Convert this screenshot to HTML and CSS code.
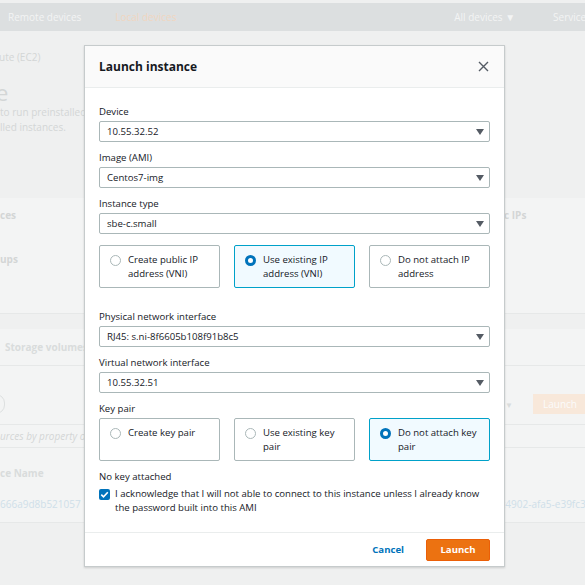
FILE: index.html
```html
<!DOCTYPE html>
<html>
<head>
  <title>Launch instance</title>
  <link rel="stylesheet" href="styles.css">
</head>
<body>

  <!-- Page behind the dialog -->
  <div class="topnav">
    <span class="nav-link">Remote devices</span>
    <span class="nav-link active">Local devices</span>
    <span class="nav-spacer"></span>
    <span class="nav-link">All devices &#9660;</span>
    <span class="nav-link">Services</span>
  </div>

  <div class="page">
    <div class="crumb">ute (EC2)</div>
    <div class="page-title">e</div>
    <div class="page-desc"> to run preinstalled<br>lled instances.</div>

    <div class="resources">
      <div class="res-col">
        <div class="res-item">ces</div>
        <div class="res-item">ups</div>
      </div>
      <div class="res-col res-right">
        <div class="res-item">Elastic IPs</div>
      </div>
    </div>

    <div class="volumes">
      <div class="tabs"><span class="tab">Storage volumes</span></div>
      <div class="toolbar">
        <span class="search"></span>
        <span class="toolbar-spacer"></span>
        <span class="filter-select">&#9660;</span>
        <span class="bg-btn">Launch</span>
      </div>
      <div class="filter-hint">urces by property or</div>
      <div class="table-head">ce Name</div>
      <div class="table-row">
        <span class="cell-link">666a9d8b521057</span>
        <span class="cell-link cell-right">s.i-9a7c4902-afa5-e39fc3a1</span>
      </div>
    </div>
  </div>

  <!-- Launch instance dialog -->
  <div class="modal">
    <div class="modal-header">
      <div class="modal-title">Launch instance</div>
      <svg class="close-icon" width="11" height="11" viewBox="0 0 11 11">
        <path d="M1 1 L10 10 M10 1 L1 10" stroke="#545b64" stroke-width="1.4" fill="none"/>
      </svg>
    </div>

    <div class="modal-body">
      <div class="field">
        <div class="field-label">Device</div>
        <div class="select">10.55.32.52<span class="caret"></span></div>
      </div>
      <div class="field">
        <div class="field-label">Image (AMI)</div>
        <div class="select">Centos7-img<span class="caret"></span></div>
      </div>
      <div class="field">
        <div class="field-label">Instance type</div>
        <div class="select">sbe-c.small<span class="caret"></span></div>
      </div>

      <div class="tiles ip-tiles">
        <div class="tile">
          <span class="radio"></span>
          <span class="tile-text">Create public IP address (VNI)</span>
        </div>
        <div class="tile selected">
          <span class="radio checked"></span>
          <span class="tile-text">Use existing IP address (VNI)</span>
        </div>
        <div class="tile">
          <span class="radio"></span>
          <span class="tile-text">Do not attach IP address</span>
        </div>
      </div>

      <div class="field">
        <div class="field-label">Physical network interface</div>
        <div class="select">RJ45: s.ni-8f6605b108f91b8c5<span class="caret"></span></div>
      </div>
      <div class="field">
        <div class="field-label">Virtual network interface</div>
        <div class="select">10.55.32.51<span class="caret"></span></div>
      </div>
      <div class="field">
        <div class="field-label">Key pair</div>
        <div class="tiles key-tiles">
          <div class="tile">
            <span class="radio"></span>
            <span class="tile-text">Create key pair</span>
          </div>
          <div class="tile">
            <span class="radio"></span>
            <span class="tile-text">Use existing key pair</span>
          </div>
          <div class="tile selected">
            <span class="radio checked"></span>
            <span class="tile-text">Do not attach key pair</span>
          </div>
        </div>
      </div>

      <div class="field-label no-key">No key attached</div>
      <div class="ack">
        <span class="checkbox">
          <svg width="11" height="11" viewBox="0 0 11 11">
            <path d="M2.3 5.6 L4.5 7.8 L8.8 3.2" stroke="#fff" stroke-width="1.6" fill="none"/>
          </svg>
        </span>
        <span class="ack-text">I acknowledge that I will not able to connect to this instance unless I already know the password built into this AMI</span>
      </div>
    </div>

    <div class="modal-footer">
      <span class="link-btn">Cancel</span>
      <span class="primary-btn">Launch</span>
    </div>
  </div>

</body>
</html>
```

FILE: styles.css
```css
body {
  font-family: 'Open Sans', sans-serif;
  background-color: #eff0f0;
  margin: 0;
  width: 585px;
  height: 585px;
  overflow: hidden;
  position: relative;
}

/* Top navigation (faded behind the dialog) */
.topnav {
  margin-top: 3px;
  height: 28px;
  background-color: #dcdfe0;
  display: flex;
  align-items: center;
  padding-left: 8px;
  font-size: 10px;
  color: #f3f4f4;
}

.nav-link {
  margin-right: 34px;
  white-space: nowrap;
}

.nav-link.active {
  color: #f0d6c0;
}

.nav-link:nth-child(4) {
  margin-right: 38px;
}

.nav-link:last-child {
  margin-right: -6px;
}

.nav-spacer {
  flex: 1;
}

/* Page content */
.page {
  color: #d3d6d6;
  font-size: 10px;
}

.crumb {
  margin: 19px 0 0 -1px;
  height: 15px;
  line-height: 15px;
}

.page-title {
  margin: 14px 0 0 -4px;
  font-size: 22px;
  line-height: 26px;
}

.page-desc {
  margin-top: 0;
  line-height: 15px;
}

.resources {
  margin-top: 63px;
  height: 115px;
  background-color: #f3f4f4;
  border-bottom: 1px solid #e6e8e8;
  display: grid;
  grid-template-columns: 1fr 105px;
  font-weight: bold;
}

.res-item {
  margin-top: 10px;
  height: 34px;
  line-height: 15px;
}

.res-right .res-item {
  margin-left: -3px;
}

.volumes {
  margin-top: 15px;
  background-color: #f3f4f4;
  border-bottom: 1px solid #e6e8e8;
}

.tabs {
  height: 36px;
  line-height: 36px;
  border-bottom: 1px solid #e6e8e8;
  padding-left: 5px;
  font-weight: bold;
  color: #d9dcdc;
}

.toolbar {
  display: flex;
  align-items: center;
  height: 40px;
  padding-top: 18px;
  border-bottom: 1px solid #e6e8e8;
}

.search {
  width: 20px;
  height: 18px;
  margin-left: -17px;
  border: 1px solid #dde0e0;
  border-radius: 9px;
}

.toolbar-spacer {
  flex: 1;
}

.filter-select {
  color: #d9dcdc;
  font-size: 8px;
  margin-right: 20px;
}

.bg-btn {
  width: 60px;
  height: 20px;
  line-height: 20px;
  padding-left: 10px;
  margin-right: -18px;
  background-color: #f8e8da;
  color: #fbfbfb;
}

.filter-hint {
  height: 22px;
  line-height: 22px;
  font-style: italic;
  border-bottom: 1px solid #e6e8e8;
}

.table-head {
  height: 40px;
  line-height: 50px;
  font-weight: bold;
  color: #d9dcdc;
}

.table-row {
  height: 34px;
  line-height: 32px;
  display: flex;
  justify-content: space-between;
  color: #cfdfe9;
}

.cell-right {
  margin-right: -12px;
}

/* Dialog */
.modal {
  position: absolute;
  left: 84px;
  top: 45px;
  width: 421px;
  box-sizing: border-box;
  background-color: #fff;
  border: 1px solid #c6cbcc;
  box-shadow: 0 1px 2px rgba(0, 0, 0, 0.15);
  color: #16191f;
  font-size: 9.6px;
}

.modal-header {
  height: 41px;
  padding: 0 14px;
  background-color: #fafafa;
  border-bottom: 1px solid #eaeded;
  display: flex;
  align-items: center;
  justify-content: space-between;
}

.modal-title {
  font-size: 12px;
  font-weight: bold;
}

.close-icon {
  margin-right: 1px;
}

.modal-body {
  padding: 16px 14px 17px;
}

.field {
  margin-bottom: 8px;
}

.field-label {
  line-height: 15px;
  margin-bottom: 2px;
}

.select {
  position: relative;
  height: 21px;
  line-height: 19px;
  box-sizing: border-box;
  border: 1px solid #aab7b8;
  border-radius: 2px;
  padding-left: 7px;
}

.caret {
  position: absolute;
  right: 5px;
  top: 7px;
  border-left: 4px solid transparent;
  border-right: 4px solid transparent;
  border-top: 6px solid #545b64;
}

/* Radio tiles */
.tiles {
  display: grid;
  grid-template-columns: 1fr 1fr 1fr;
  gap: 14px;
}

.ip-tiles {
  margin: 11px 0 21px;
}

.tile {
  height: 43px;
  box-sizing: border-box;
  border: 1px solid #aab7b8;
  border-radius: 2px;
  padding: 7px 8px 0 10px;
  display: flex;
  align-items: flex-start;
}

.tile.selected {
  background-color: #f1faff;
  border-color: #00a1c9;
}

.radio {
  flex: none;
  width: 11px;
  height: 11px;
  box-sizing: border-box;
  margin-top: 2px;
  border: 1px solid #aab7b8;
  border-radius: 50%;
  background-color: #fff;
}

.radio.checked {
  border: 3.5px solid #0073bb;
}

.tile-text {
  margin-left: 7px;
  line-height: 14px;
}

.no-key {
  margin-top: 6px;
}

.ack {
  display: flex;
  align-items: flex-start;
  margin-top: 3px;
}

.checkbox {
  flex: none;
  width: 11px;
  height: 11px;
  margin: 2px 5px 0 0;
  border-radius: 2px;
  background-color: #0073bb;
  display: flex;
}

.ack-text {
  line-height: 14px;
}

.modal-footer {
  height: 33px;
  border-top: 1px solid #eaeded;
  padding: 0 14px;
  display: flex;
  align-items: center;
  justify-content: flex-end;
}

.link-btn {
  color: #0073bb;
  font-weight: bold;
  margin-right: 22px;
}

.primary-btn {
  width: 64px;
  height: 22px;
  line-height: 20px;
  box-sizing: border-box;
  border: 1px solid #eb5f07;
  border-radius: 2px;
  background-color: #ec7211;
  color: #fff;
  font-weight: bold;
  text-align: center;
}
```
